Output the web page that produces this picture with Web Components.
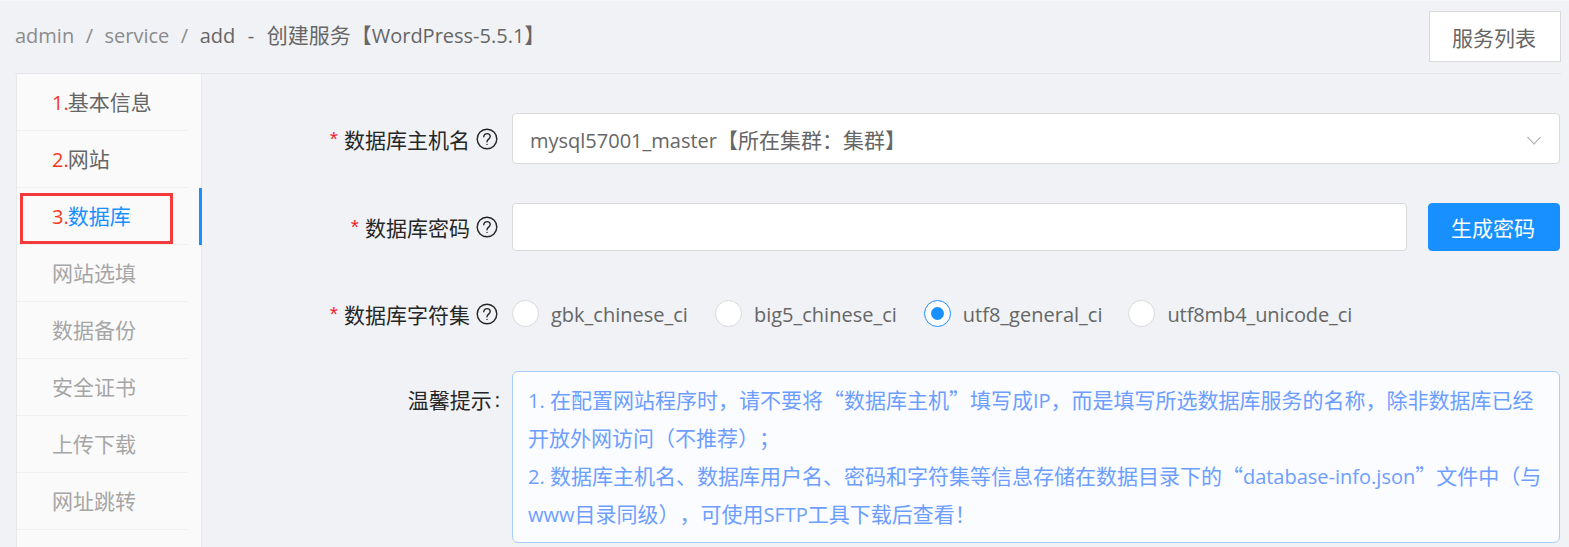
<!DOCTYPE html>
<html lang="zh">
<head>
<meta charset="utf-8">
<title>创建服务</title>
<style>
    html, body { margin: 0; height: 100%; overflow: hidden; }
    body {
        background: #f0f2f5;
        font-family: "Open Sans", "Noto Sans CJK SC", sans-serif;
        font-size: 21px;
        text-spacing-trim: space-all;
    }
</style>
</head>
<body>
<service-page></service-page>

<script>
class PageHeader extends HTMLElement {
    constructor() {
        super();
        this.attachShadow({ mode: 'open' });
        this.shadowRoot.innerHTML = `
            <style>
                :host {
                    display: flex;
                    align-items: flex-start;
                    justify-content: space-between;
                    height: 73px;
                    box-sizing: border-box;
                    margin: 0 8px 0 15px;
                    padding-top: 10px;
                    border-bottom: 1px solid #e3e5e8;
                }
                .crumb { color: #8c8c8c; line-height: 49px; white-space: pre; font-size: 20px; }
                .sep { margin: 0 11.5px; }
                .now { color: #666; }
                button {
                    width: 132px;
                    height: 51px;
                    padding: 0 2px 0 0;
                    background: #fff;
                    border: 1px solid #d9d9d9;
                    color: #666;
                    font: inherit;
                }
            </style>
            <div class="crumb">admin<span class="sep">/</span>service<span class="sep">/</span><span class="now"><slot></slot></span></div>
            <button>服务列表</button>
        `;
    }
}

class SideNav extends HTMLElement {
    constructor() {
        super();
        this.attachShadow({ mode: 'open' });
        this.shadowRoot.innerHTML = `
            <style>
                :host {
                    display: block;
                    width: 186px;
                    flex: none;
                    box-sizing: border-box;
                    background: #fafafa;
                    border-left: 1px solid #e8e8e8;
                    border-right: 1px solid #e8e8e8;
                }
            </style>
            <slot></slot>
        `;
    }
}

class NavItem extends HTMLElement {
    constructor() {
        super();
        this.attachShadow({ mode: 'open' });
        const num = this.getAttribute('num');
        this.shadowRoot.innerHTML = `
            <style>
                :host {
                    display: block;
                    position: relative;
                    height: 57px;
                    margin-right: 13px;
                    box-sizing: border-box;
                    padding-left: 35px;
                    border-bottom: 1px solid #f0f0f0;
                    line-height: 56px;
                    color: #a6a6a6;
                    white-space: nowrap;
                }
                :host([done]) { color: #666; }
                :host([active]) { color: #1890ff; }
                :host([active])::after {
                    content: "";
                    position: absolute;
                    top: 0;
                    bottom: -1px;
                    right: -14px;
                    width: 3px;
                    background: #1890ff;
                }
                :host([active])::before {
                    content: "";
                    position: absolute;
                    left: 3px;
                    top: 5px;
                    width: 153px;
                    height: 51px;
                    box-sizing: border-box;
                    border: 3px solid #f43a3a;
                }
                .num { color: #f5381f; font-size: 20px; margin-right: -1px; line-height: 0; }
            </style>
            ${num ? `<span class="num">${num}.</span>` : ''}<slot></slot>
        `;
    }
}

class FormRow extends HTMLElement {
    constructor() {
        super();
        this.attachShadow({ mode: 'open' });
        const required = this.hasAttribute('required');
        const help = this.hasAttribute('help');
        this.shadowRoot.innerHTML = `
            <style>
                :host { display: flex; align-items: flex-start; }
                .label {
                    width: 310px;
                    flex: none;
                    display: flex;
                    align-items: center;
                    justify-content: flex-end;
                    height: var(--label-h, 51px);
                    color: #262626;
                    white-space: nowrap;
                }
                .star { color: #f5222d; margin-right: 6px; font-size: 21px; font-family: "Liberation Sans", sans-serif; }
                svg { width: 22px; height: 22px; margin-left: 6px; margin-right: 14px; }
                .colon { margin: 0 12px 0 3px; font-size: 20px; }
                .field { flex: 1; min-width: 0; }
            </style>
            <div class="label">
                ${required ? '<span class="star">*</span>' : ''}
                <span>${this.getAttribute('label')}</span>
                ${help ? `<svg viewBox="0 0 22 22" fill="none" stroke="#262626" stroke-width="1.4">
                    <circle cx="11" cy="11" r="9.8"/>
                    <path d="M7.8 8.8c0-1.9 1.4-3.2 3.2-3.2s3.2 1.2 3.2 3c0 2.500-3.200 2.500-3.200 5.200" stroke-linecap="round"/>
                    <circle cx="11" cy="16.400" r="0.700" fill="#262626" stroke="none"/>
                </svg>` : '<span class="colon">:</span>'}
            </div>
            <div class="field"><slot></slot></div>
        `;
    }
}

class SelectBox extends HTMLElement {
    constructor() {
        super();
        this.attachShadow({ mode: 'open' });
        this.shadowRoot.innerHTML = `
            <style>
                :host {
                    display: flex;
                    align-items: center;
                    justify-content: space-between;
                    height: 51px;
                    box-sizing: border-box;
                    padding: 0 18px 0 17px;
                    background: #fff;
                    border: 1px solid #d9d9d9;
                    border-radius: 4px;
                    color: #666;
                    white-space: nowrap;
                }
                svg { width: 14px; height: 9px; margin-top: 4px; }
            </style>
            <span><slot></slot></span>
            <svg viewBox="0 0 14 9" fill="none" stroke="#a6a6a6" stroke-width="1.1"><path d="M.5 1l6.500 7 6.500-7"/></svg>
        `;
    }
}

class PasswordField extends HTMLElement {
    constructor() {
        super();
        this.attachShadow({ mode: 'open' });
        this.shadowRoot.innerHTML = `
            <style>
                :host { display: flex; gap: 21px; }
                .input {
                    flex: 1;
                    height: 48px;
                    box-sizing: border-box;
                    background: #fff;
                    border: 1px solid #d9d9d9;
                    border-radius: 4px;
                }
                button {
                    width: 132px;
                    height: 48px;
                    padding: 0 2px 0 0;
                    background: #1890ff;
                    border: 1px solid #1890ff;
                    border-radius: 4px;
                    color: #fff;
                    font: inherit;
                }
            </style>
            <div class="input"></div>
            <button>生成密码</button>
        `;
    }
}

class RadioOption extends HTMLElement {
    constructor() {
        super();
        this.attachShadow({ mode: 'open' });
        this.shadowRoot.innerHTML = `
            <style>
                :host {
                    display: inline-flex;
                    align-items: center;
                    gap: 12px;
                    color: #666;
                    font-size: 20px;
                    white-space: nowrap;
                }
                .text { padding-top: 2px; }
                .dot {
                    width: 27px;
                    height: 27px;
                    box-sizing: border-box;
                    background: #fff;
                    border: 1px solid #d9d9d9;
                    border-radius: 50%;
                    display: flex;
                    align-items: center;
                    justify-content: center;
                }
                :host([checked]) .dot { border-color: #1890ff; }
                :host([checked]) .dot::after {
                    content: "";
                    width: 13px;
                    height: 13px;
                    border-radius: 50%;
                    background: #1890ff;
                }
            </style>
            <span class="dot"></span><span class="text"><slot></slot></span>
        `;
    }
}

class RadioGroup extends HTMLElement {
    constructor() {
        super();
        this.attachShadow({ mode: 'open' });
        this.shadowRoot.innerHTML = `
            <style>
                :host { display: flex; align-items: center; height: 51px; gap: 27px; }
            </style>
            <slot></slot>
        `;
    }
}

class TipBox extends HTMLElement {
    constructor() {
        super();
        this.attachShadow({ mode: 'open' });
        this.shadowRoot.innerHTML = `
            <style>
                :host {
                    display: block;
                    box-sizing: border-box;
                    height: 172px;
                    padding: 9px 15px 0;
                    background: #fafcff;
                    border: 1px solid #a8cdfa;
                    border-radius: 6px;
                    color: #6d9eff;
                    line-height: 38px;
                    white-space: nowrap;
                }
            </style>
            <slot></slot>
        `;
    }
}

class ServicePage extends HTMLElement {
    constructor() {
        super();
        this.attachShadow({ mode: 'open' });
        this.shadowRoot.innerHTML = `
            <style>
                :host { display: flex; flex-direction: column; height: 547px; border-top: 1px solid #f5f6f7; box-sizing: border-box; }
                .body { flex: 1; display: flex; margin-left: 16px; min-height: 0; }
                .form {
                    flex: 1;
                    min-width: 0;
                    padding: 39px 9px 0 0;
                    display: flex;
                    flex-direction: column;
                }
                .r2 { margin-top: 39px; --label-h: 48px; }
                .r3 { margin-top: 37px; }
                .r4 { margin-top: 32px; --label-h: 56px; }
                .en { font-size: 20px; line-height: 0; }
                .cj { font-family: "Noto Sans CJK SC", sans-serif; line-height: 0; }
                .zh { font-size: 21px; line-height: 0; }
                .dash { margin: 0 12.500px; }
                .last { margin-left: -1px; letter-spacing: -0.1px; }
            </style>
            <page-header>add<span class="dash">-</span><span class="zh">创建服务【</span>WordPress-5.5.1<span class="zh">】</span></page-header>
            <div class="body">
                <side-nav>
                    <nav-item num="1" done>基本信息</nav-item>
                    <nav-item num="2" done>网站</nav-item>
                    <nav-item num="3" active>数据库</nav-item>
                    <nav-item>网站选填</nav-item>
                    <nav-item>数据备份</nav-item>
                    <nav-item>安全证书</nav-item>
                    <nav-item>上传下载</nav-item>
                    <nav-item>网址跳转</nav-item>
                </side-nav>
                <div class="form">
                    <form-row required help label="数据库主机名">
                        <select-box><span class="en">mysql57001_master</span>【所在集群：集群】</select-box>
                    </form-row>
                    <form-row class="r2" required help label="数据库密码">
                        <password-field></password-field>
                    </form-row>
                    <form-row class="r3" required help label="数据库字符集">
                        <radio-group>
                            <radio-option>gbk_chinese_ci</radio-option>
                            <radio-option>big5_chinese_ci</radio-option>
                            <radio-option checked>utf8_general_ci</radio-option>
                            <radio-option class="last">utf8mb4_unicode_ci</radio-option>
                        </radio-group>
                    </form-row>
                    <form-row class="r4" label="温馨提示">
                        <tip-box><span class="en">1. </span>在配置网站程序时，请不要将<span class="cj">“</span>数据库主机<span class="cj">”</span>填写成<span class="en">IP</span>，而是填写所选数据库服务的名称，除非数据库已经<br>开放外网访问（不推荐）；<br><span class="en">2. </span>数据库主机名、数据库用户名、密码和字符集等信息存储在数据目录下的<span class="cj">“</span><span class="en">database-info.json</span><span class="cj">”</span>文件中（与<br><span class="en">www</span>目录同级），可使用<span class="en">SFTP</span>工具下载后查看！</tip-box>
                    </form-row>
                </div>
            </div>
        `;
    }
}

customElements.define('page-header', PageHeader);
customElements.define('side-nav', SideNav);
customElements.define('nav-item', NavItem);
customElements.define('form-row', FormRow);
customElements.define('select-box', SelectBox);
customElements.define('password-field', PasswordField);
customElements.define('radio-option', RadioOption);
customElements.define('radio-group', RadioGroup);
customElements.define('tip-box', TipBox);
customElements.define('service-page', ServicePage);
</script>
</body>
</html>
